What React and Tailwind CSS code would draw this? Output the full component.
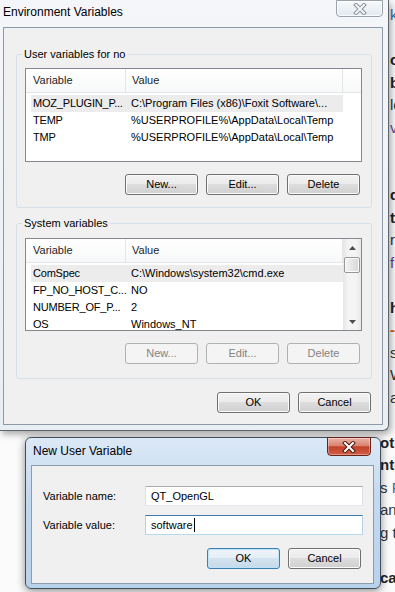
import clsx from 'clsx'

const userVars = [
  ['MOZ_PLUGIN_P...', 'C:\\Program Files (x86)\\Foxit Software\\...'],
  ['TEMP', '%USERPROFILE%\\AppData\\Local\\Temp'],
  ['TMP', '%USERPROFILE%\\AppData\\Local\\Temp'],
]

const sysVars = [
  ['ComSpec', 'C:\\Windows\\system32\\cmd.exe'],
  ['FP_NO_HOST_C...', 'NO'],
  ['NUMBER_OF_P...', '2'],
  ['OS', 'Windows_NT'],
]

// bits of the web page peeking out behind the dialogs
const pageLines = [
  ['k', 'pl-[10px] text-[#2f6db5]'],
  ['', ''],
  ['o', 'pl-[10px] font-bold text-[#222]'],
  ['b', 'pl-[10px] font-bold text-[#222]'],
  ['le', 'pl-[10px] text-[#333]'],
  ['v', 'pl-[10px] text-[#5b4e9c]'],
  ['', ''],
  ['', ''],
  ['d', 'pl-[10px] font-bold text-[#222]'],
  ['t', 'pl-[10px] font-bold text-[#222]'],
  ['r', 'pl-[10px] text-[#333]'],
  ['f', 'pl-[10px] text-[#6a3d8f]'],
  ['', ''],
  ['h', 'pl-[10px] font-bold text-[#222]'],
  ['-', 'pl-[10px] font-bold text-[#d4541c]'],
  ['se', 'pl-[10px] text-[#333]'],
  ['W', 'pl-[10px] text-[#333]'],
  ['a', 'pl-[10px] text-[#333]'],
  ['', ''],
  ['ot', 'font-bold text-[#222]'],
  ['nte', 'font-bold text-[#222]'],
  ['s F', 'text-[#333]'],
  ['anc', 'text-[#333]'],
  ['g to', 'text-[#333]'],
  ['', ''],
  ['ca', 'font-bold text-[#222]'],
]

function Btn({ children, disabled, focused }) {
  return (
    <div
      className={clsx(
        'flex h-[21px] w-[73px] items-center justify-center rounded-[3px] border text-[11px]',
        disabled
          ? 'border-[#adb2b5] bg-[#f4f4f4] text-[#838383]'
          : focused
            ? 'border-[#3c7fb1] bg-[linear-gradient(#eef5fa_0%,#e4eef6_49%,#d3e3ef_50%,#c6dae9_100%)] text-black shadow-[inset_0_0_0_1px_#bfe2f8]'
            : 'border-[#707070] bg-[linear-gradient(#f2f2f2_0%,#ebebeb_49%,#dddddd_50%,#cfcfcf_100%)] text-black shadow-[inset_0_0_0_1px_#fbfbfb]',
      )}
    >
      {children}
    </div>
  )
}

function CloseBtn({ active }) {
  return (
    <div
      className={clsx(
        'flex items-center justify-center rounded-b-[4px] border',
        active
          ? 'h-[19px] w-[44px] border-[#6b2219] bg-[linear-gradient(180deg,#eab3a6_0%,#d98270_45%,#c2412a_52%,#cf5e44_100%)] shadow-[inset_0_0_0_1px_rgba(255,255,255,0.35)]'
          : 'h-[17px] w-[47px] border-[#9aa2ab] bg-[linear-gradient(180deg,#f7f9fb,#e4e9ef)] shadow-[inset_0_0_0_1px_rgba(255,255,255,0.8)]',
      )}
    >
      <svg width="14" height="12" viewBox="0 0 14 12">
        <path
          d="M3 2 L11 10 M11 2 L3 10"
          stroke={active ? '#4a1a12' : '#8a929b'}
          strokeWidth="4"
          strokeLinecap="square"
        />
        <path
          d="M3 2 L11 10 M11 2 L3 10"
          stroke={active ? '#ffffff' : '#f4f6f8'}
          strokeWidth="2"
          strokeLinecap="square"
        />
      </svg>
    </div>
  )
}

function Scrollbar() {
  return (
    <div className="flex w-[18px] shrink-0 flex-col bg-[linear-gradient(90deg,#e6e6e6,#f4f4f4_30%,#f4f4f4_70%,#e8e8e8)]">
      <div className="flex h-[17px] items-center justify-center">
        <svg width="7" height="4" viewBox="0 0 7 4">
          <path d="M0 4 L3.5 0 L7 4 Z" fill="#4d4d4d" />
        </svg>
      </div>
      <div className="mx-[1px] mt-[1px] h-[16px] rounded-[2px] border border-[#979797] bg-[linear-gradient(90deg,#f3f3f3,#e6e6e6_50%,#d6d6d6)] shadow-[inset_0_0_0_1px_#fbfbfb]" />
      <div className="flex-1" />
      <div className="flex h-[17px] items-center justify-center">
        <svg width="7" height="4" viewBox="0 0 7 4">
          <path d="M0 0 L3.5 4 L7 0 Z" fill="#4d4d4d" />
        </svg>
      </div>
    </div>
  )
}

function ListBox({ rows, scroll, height }) {
  return (
    <div className={clsx('ml-[8px] flex w-[337px] overflow-hidden border border-[#828790] bg-white', height)}>
      <div className="min-w-0 flex-1">
        <div className="flex h-[24px] border-b border-[#e5e5e5] bg-[linear-gradient(180deg,#ffffff,#f7f8f9)] text-[11px] text-[#1e1e1e]">
          <div className="flex w-[100px] shrink-0 items-center border-r border-[#e5e5e5] pl-[7px]">Variable</div>
          <div className="flex w-[217px] shrink-0 items-center border-r border-[#e5e5e5] pl-[6px]">Value</div>
          <div className="flex-1" />
        </div>
        <div className="pt-[2px]">
          {rows.map(([name, value], i) => (
            <div
              key={name}
              className={clsx(
                'ml-[5px] flex h-[17px] w-[312px] items-center overflow-hidden whitespace-nowrap text-[11px] text-black',
                i === 0 && 'bg-[#ececec]',
              )}
            >
              <div className="w-[100px] shrink-0 pl-[2px] tracking-[-0.2px]">{name}</div>
              <div>{value}</div>
            </div>
          ))}
        </div>
      </div>
      {scroll && <Scrollbar />}
    </div>
  )
}

function GroupBox({ label, children, className }) {
  return (
    <div className={clsx('relative rounded-[3px] border border-[#d5dfe5]', className)}>
      <div className="absolute left-[5px] top-[-9px] bg-[#f0f0f0] px-[2px] text-[11px] leading-[16px] text-black">
        {label}
      </div>
      {children}
    </div>
  )
}

export default function App() {
  return (
    <div className="relative h-[592px] w-[395px] overflow-hidden bg-[#fbfbfb] font-['Liberation_Sans',Arial,sans-serif]">
      {/* page behind */}
      <div className="pl-[380px] pt-[4px] text-[15px]">
        {pageLines.map(([text, cls], i) => (
          <div key={i} className={clsx('h-[22.5px] whitespace-nowrap leading-[22.5px]', cls)}>
            {text === 's F' ? (
              <>
                s <span className="text-[#2f6db5]">F</span>
              </>
            ) : (
              text
            )}
          </div>
        ))}
      </div>

      {/* Environment Variables */}
      <div className="absolute left-0 top-0 h-[431px] w-[389px] rounded-br-[6px] border-b border-r border-[#5d6670] bg-[linear-gradient(180deg,#f4f6f9,#e9eef3)] shadow-[2px_3px_7px_rgba(0,0,0,0.35)]">
        <div className="relative h-[27px] pl-[3px] pt-[4px] text-[12px] leading-[16px] text-black">
          Environment Variables
          <div className="absolute right-[5px] top-0">
            <CloseBtn />
          </div>
        </div>
        <div className="ml-[3px] h-[398px] w-[380px] border border-[#8e9aa6] bg-[#f0f0f0] pl-[12px] pr-[10px] pt-[26px]">
          <GroupBox label="User variables for no" className="h-[154px]">
            <div className="pt-[13px]">
              <ListBox rows={userVars} height="h-[94px]" />
            </div>
            <div className="mt-[12px] flex justify-end gap-[8px] pr-[11px]">
              <Btn>New...</Btn>
              <Btn>Edit...</Btn>
              <Btn>Delete</Btn>
            </div>
          </GroupBox>

          <GroupBox label="System variables" className="mt-[15px] h-[156px]">
            <div className="pt-[14px]">
              <ListBox rows={sysVars} scroll height="h-[93px]" />
            </div>
            <div className="mt-[12px] flex justify-end gap-[8px] pr-[11px]">
              <Btn disabled>New...</Btn>
              <Btn disabled>Edit...</Btn>
              <Btn disabled>Delete</Btn>
            </div>
          </GroupBox>

          <div className="mt-[13px] flex justify-end gap-[8px] pr-[1px]">
            <Btn>OK</Btn>
            <Btn>Cancel</Btn>
          </div>
        </div>
      </div>

      {/* New User Variable */}
      <div className="absolute left-[25px] top-[437px] h-[152px] w-[356px] rounded-[6px] border border-[#3f4d5c] bg-[linear-gradient(180deg,#dce9f6_0%,#c3d9f0_40%,#b9d2ec_100%)] shadow-[0_2px_8px_rgba(0,0,0,0.45)]">
        <div className="relative h-[27px] pl-[7px] pt-[5px] text-[12px] leading-[16px] text-black">
          New User Variable
          <div className="absolute right-[9px] top-[-1px]">
            <CloseBtn active />
          </div>
        </div>
        <div className="ml-[5px] h-[119px] w-[343px] border border-[#8b9cad] bg-[#f0f0f0] pt-[20px] text-[11px] text-black">
          <div className="flex items-center pl-[11px]">
            <div className="w-[102px]">Variable name:</div>
            <div className="flex h-[20px] w-[218px] items-center border border-[#abadb3] border-l-[#dbdfe6] border-r-[#dbdfe6] border-b-[#e3e9ef] bg-white pl-[5px]">
              QT_OpenGL
            </div>
          </div>
          <div className="mt-[9px] flex items-center pl-[11px]">
            <div className="w-[102px]">Variable value:</div>
            <div className="flex h-[20px] w-[218px] items-center border border-[#3d7bad] border-l-[#b5cfe7] border-r-[#b5cfe7] border-b-[#b7d9ed] bg-white pl-[5px]">
              software
              <span className="ml-[1px] h-[14px] w-[1px] bg-black" />
            </div>
          </div>
          <div className="mt-[13px] flex justify-end gap-[8px] pr-[12px]">
            <Btn focused>OK</Btn>
            <Btn>Cancel</Btn>
          </div>
        </div>
      </div>
    </div>
  )
}
